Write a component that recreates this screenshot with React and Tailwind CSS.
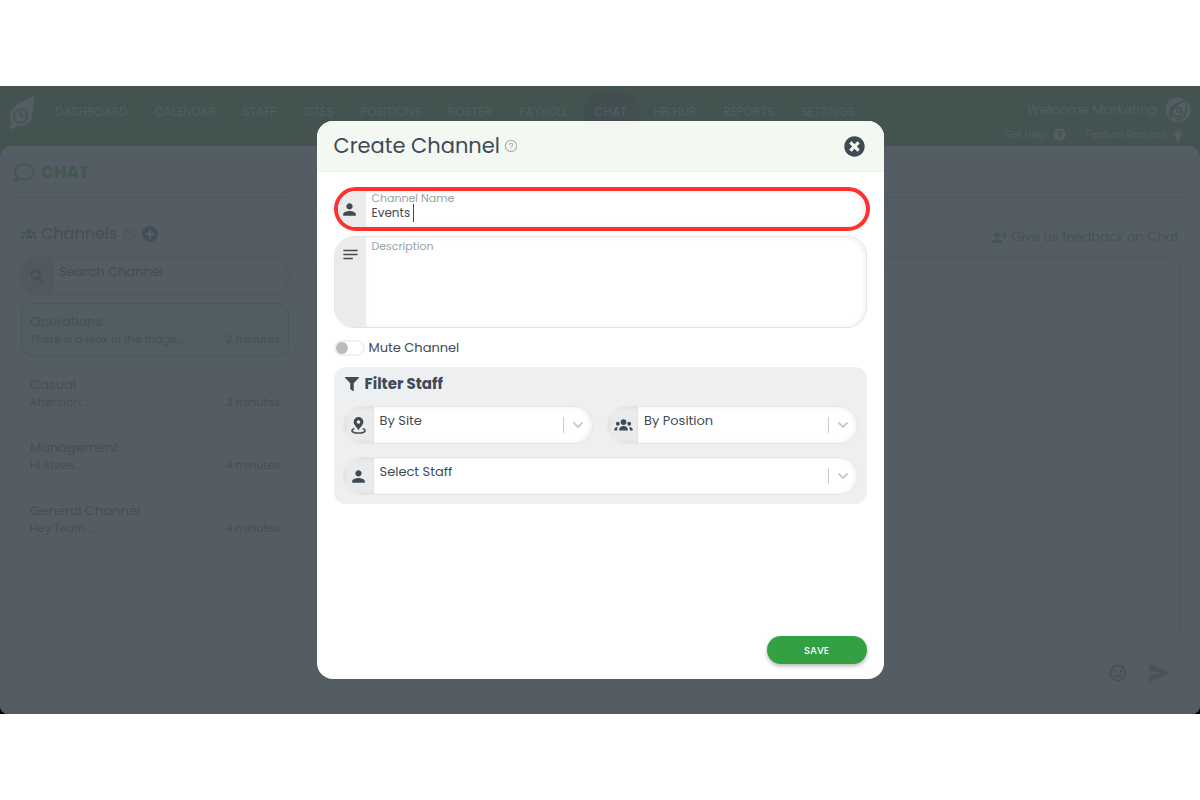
import { useState } from "react";
import {
    FaFilter,
    FaPlusCircle,
    FaQuestionCircle,
    FaRegComment,
    FaTimesCircle,
} from "react-icons/fa";
import {
    MdInsertEmoticon,
    MdNotes,
    MdPerson,
    MdRecordVoiceOver,
    MdSearch,
    MdSend,
} from "react-icons/md";
import { AiOutlineQuestionCircle } from "react-icons/ai";
import { ChevronDown } from "lucide-react";

const navItems = [
    "DASHBOARD",
    "CALENDAR",
    "STAFF",
    "SITES",
    "POSITIONS",
    "ROSTER",
    "PAYROLL",
    "CHAT",
    "HR HUB",
    "REPORTS",
    "SETTINGS",
];

const channels = [
    { name: "Operations", preview: "There is a leak in the fridge,...", time: "2 minutes" },
    { name: "Casual", preview: "Attention: ...", time: "3 minutes" },
    { name: "Management", preview: "Hi Steve...", time: "4 minutes" },
    { name: "General Channel", preview: "Hey Team. ...", time: "4 minutes" },
];

const LeafLogo = ({ className }) => (
    <svg viewBox="0 0 26 36" className={className} fill="none">
        <path
            d="M26 0C18 5 1 10 1 22c0 3 1 5 2 6l-3 5 4 3 3-4c8 1 14-2 16-8C25 16 25 8 26 0Z"
            fill="currentColor"
        />
        <circle
            cx="11.5"
            cy="21.5"
            r="7"
            stroke="#425350"
            strokeWidth="2"
            strokeDasharray="4.5 1"
        />
        <path d="M11.5 16v6h6" stroke="#425350" strokeWidth="1.5" />
    </svg>
);

const LeafAvatar = () => (
    <svg viewBox="0 0 26 26" className="size-[26px]" fill="none">
        <circle cx="13" cy="13" r="12.5" fill="#535d63" />
        <path d="M21 3C14 6 4 9 5 17c0 2 1 3 2 4" stroke="#425350" strokeWidth="2" />
        <path d="M21 3c1 7 1 13-2 16-2 3-5 4-9 4" stroke="#425350" strokeWidth="1.5" />
        <circle cx="12" cy="15" r="5" stroke="#425350" strokeWidth="2" />
        <path d="M12 11.5V15h4" stroke="#425350" strokeWidth="1.5" />
    </svg>
);

const BulbIcon = () => (
    <svg viewBox="0 0 14 14" className="size-[14px]" fill="none">
        <path
            d="M7 3a3.5 3.5 0 0 0-2 6.400V11h4V9.400A3.500 3.500 0 0 0 7 3ZM5.500 11h3v2.500h-3Z"
            fill="currentColor"
        />
        <path
            d="M7 0v1.500M2.300 2l1 1M11.700 2l-1 1M0 6.500h1.800M12.200 6.500H14"
            stroke="currentColor"
        />
    </svg>
);

const PeopleIcon = ({ className }) => (
    <svg viewBox="0 0 20 13" className={className} fill="currentColor">
        <circle cx="10" cy="3.2" r="3" />
        <circle cx="4" cy="5" r="2" />
        <circle cx="16" cy="5" r="2" />
        <path d="M5.500 12v-1.200C5.500 8.800 7.400 7.400 10 7.400s4.500 1.400 4.500 3.400V12Z" />
        <path d="M.3 12v-1c0-1.600 1.500-2.600 3.700-2.700-.5.800-.7 1.600-.7 2.500V12Z" />
        <path d="M19.700 12v-1c0-1.600-1.500-2.600-3.700-2.700.5.800.7 1.600.7 2.500V12Z" />
    </svg>
);

const PinIcon = ({ className }) => (
    <svg viewBox="0 0 16 18" className={className} fill="none">
        <path
            fillRule="evenodd"
            d="M8 0a5.200 5.200 0 0 0-5.200 5.200c0 3 3.200 5.300 5.200 8.800 2-3.500 5.200-5.800 5.200-8.800A5.200 5.200 0 0 0 8 0Zm0 3.400a1.900 1.900 0 1 1 0 3.800 1.900 1.900 0 0 1 0-3.800Z"
            fill="currentColor"
        />
        <path
            d="M3.500 12.200C2 12.700 1 13.400 1 14.200 1 15.800 4 17 8 17s7-1.200 7-2.800c0-.8-1-1.500-2.500-2"
            stroke="currentColor"
            strokeWidth="1.700"
        />
    </svg>
);

const SelectField = ({ id, label, icon }) => (
    <div className="flex h-[38px] min-w-0 flex-1 overflow-hidden rounded-full border border-[#e4e5e6] bg-white">
        <label
            htmlFor={id}
            aria-label={label}
            className="flex w-[30px] shrink-0 items-center justify-center bg-[#ebebeb] text-[#3f4b54] shadow-[inset_1px_0_4px_rgba(0,0,0,0.08)]"
        >
            {icon}
        </label>
        <div className="relative flex-1 rounded-r-full shadow-[inset_-2px_0_5px_rgba(0,0,0,0.06)]">
            <select
                id={id}
                className="h-full w-full appearance-none bg-transparent pb-2 pl-1.5 text-[13px] text-[#3f4b54] outline-none"
            >
                <option>{label}</option>
            </select>
            <span className="pointer-events-none absolute inset-y-0 right-1.5 flex items-center gap-1.5 text-[#cccccc]">
                <span className="h-4 w-px bg-[#cccccc]" />
                <ChevronDown className="size-4" strokeWidth={3} />
            </span>
        </div>
    </div>
);

const TopBar = () => (
    <header className="flex h-[60px] justify-between px-[9px] text-[#535d63]">
        <div className="flex items-start">
            <LeafLogo className="mt-[9px] h-[35px] w-[26px]" />
            <nav className="ml-2 flex gap-[3px] pt-1.5 text-[12px]">
                {navItems.map((item) => (
                    <a
                        key={item}
                        href="#"
                        className={
                            item === "CHAT"
                                ? "h-10 rounded-[20px] bg-[#414f50] px-3 leading-10"
                                : "h-10 px-3 leading-10"
                        }
                    >
                        {item}
                    </a>
                ))}
            </nav>
        </div>
        <div className="flex flex-col items-end pt-[11px]">
            <div className="flex items-center gap-2 text-[13px]">
                <span>Welcome Marketing</span>
                <LeafAvatar />
            </div>
            <div className="flex h-7 items-center gap-5 pr-1.5 text-[10px]">
                <a href="#" className="flex items-center gap-1.5">
                    Get Help <FaQuestionCircle className="size-[13px]" />
                </a>
                <a href="#" className="flex items-center gap-1">
                    Feature Request <BulbIcon />
                </a>
            </div>
        </div>
    </header>
);

const ChannelPanel = () => (
    <section className="w-[286px] shrink-0 rounded-xl bg-[#555d64] px-[9px] pt-[17px] shadow-[0_0_6px_#4f5b61]">
        <h2 className="flex h-6 items-center text-[16px] text-[#424e56]">
            <PeopleIcon className="mr-1 w-4" />
            Channels
            <AiOutlineQuestionCircle className="ml-1.5 size-[13px] text-[#4b5359]" />
            <button type="button" aria-label="Add channel" className="ml-1.5">
                <FaPlusCircle className="size-4" />
            </button>
        </h2>
        <div className="mt-[11px] flex h-[38px] overflow-hidden rounded-full border border-[#50595f] shadow-[0_0_4px_#4f585e]">
            <label
                htmlFor="search"
                aria-label="Search"
                className="flex w-[31px] items-center justify-center bg-[#51595f] text-[#424e56]"
            >
                <MdSearch className="size-[19px]" />
            </label>
            <input
                id="search"
                placeholder="Search Channel"
                className="min-w-0 flex-1 pb-2 pl-1.5 text-[13px] outline-none placeholder:text-[#424e56]"
            />
        </div>
        <ul className="mt-2 flex flex-col gap-[9px] text-[#444f58]">
            {channels.map((channel, idx) => (
                <li
                    key={channel.name}
                    className={
                        idx === 0
                            ? "flex h-[54px] flex-col justify-center rounded-xl border border-[#455a56] bg-[#525d62] px-2"
                            : "flex h-[54px] flex-col justify-center rounded-xl border border-[#525a60] px-2"
                    }
                >
                    <span className="text-[13px] leading-[18px]">{channel.name}</span>
                    <span className="flex justify-between text-[11px] leading-4">
                        <span>{channel.preview}</span>
                        <span>{channel.time}</span>
                    </span>
                </li>
            ))}
        </ul>
    </section>
);

const MessagePanel = () => (
    <section className="flex min-w-0 flex-1 flex-col rounded-xl bg-[#555d64] px-[9px] pt-5 shadow-[0_0_6px_#4f5b61]">
        <a
            href="#"
            className="flex h-6 items-center gap-1 self-end text-[13px] text-[#435453]"
        >
            <MdRecordVoiceOver className="size-4" />
            Give us feedback on Chat
        </a>
        <div className="mt-2 flex-1 rounded-xl border border-[#525a60] pt-3 shadow-[0_0_4px_#50595f]">
            <hr className="mx-3 border-[#4f5d60]" />
        </div>
        <div className="flex h-[58px] items-center gap-2 text-[#444f58]">
            <div className="flex h-10 flex-1 items-center justify-end rounded-full border border-[#525b61] pr-2.5">
                <MdInsertEmoticon className="size-5" />
            </div>
            <button type="button" aria-label="Send" className="pr-2 text-[#48535b]">
                <MdSend className="size-6" />
            </button>
        </div>
    </section>
);

const CreateChannelModal = () => {
    const [name, setName] = useState("Events");
    const [description, setDescription] = useState("");
    const [muted, setMuted] = useState(false);

    return (
        <div
            role="dialog"
            aria-label="Create Channel"
            className="flex h-[558px] w-[567px] flex-col overflow-hidden rounded-2xl bg-white text-[#3f4b54]"
        >
            <div className="flex h-[51px] items-center border-b border-[#eef2ed] bg-[#f3f8f3] pr-[19px] pl-[17px]">
                <h1 className="text-[21px]">Create Channel</h1>
                <AiOutlineQuestionCircle className="ml-1 size-3.5 text-[#a5adad]" />
                <button type="button" aria-label="Close" className="ml-auto">
                    <FaTimesCircle className="size-[21px]" />
                </button>
            </div>

            <form className="flex flex-1 flex-col px-[17px] pt-[15px] pb-[15px]">
                <div className="-mr-[3px] flex h-[44px] overflow-hidden rounded-full border-4 border-[#ff3030]">
                    <span className="flex w-7 shrink-0 items-center justify-center bg-[#ebebeb] pr-1">
                        <MdPerson className="size-[19px]" />
                    </span>
                    <div className="flex flex-1 flex-col rounded-r-full pl-1.5 shadow-[inset_-2px_0_5px_rgba(0,0,0,0.08)]">
                        <label
                            htmlFor="name"
                            className="text-[11px] leading-[14px] text-[#98a3a3]"
                        >
                            Channel Name
                        </label>
                        <div className="flex h-4 items-center gap-[3px]">
                            <input
                                id="name"
                                value={name}
                                onChange={(e) => setName(e.target.value)}
                                className="field-sizing-content text-[12px] leading-4 outline-none"
                            />
                            <span className="h-[18px] w-px bg-[#3f4b54]" />
                        </div>
                    </div>
                </div>

                <div className="mt-[5px] flex h-[92px] overflow-hidden rounded-[20px] border border-[#e4e4e4]">
                    <span className="flex w-[31px] shrink-0 justify-center bg-[#ebebeb] pt-2">
                        <MdNotes className="size-[19px]" />
                    </span>
                    <div className="flex flex-1 flex-col rounded-r-[20px] px-1.5 pt-px shadow-[inset_-1px_0_4px_rgba(0,0,0,0.08)]">
                        <label
                            htmlFor="description"
                            className="text-[11px] leading-4 text-[#98a3a3]"
                        >
                            Description
                        </label>
                        <textarea
                            id="description"
                            value={description}
                            onChange={(e) => setDescription(e.target.value)}
                            className="flex-1 resize-none text-[12px] outline-none"
                        />
                    </div>
                </div>

                <label className="mt-2.5 flex h-5 items-center gap-1 text-[13px]">
                    <input
                        type="checkbox"
                        checked={muted}
                        onChange={(e) => setMuted(e.target.checked)}
                        className="h-4 w-[31px] appearance-none rounded-full border-2 border-[#f0f0f0] bg-white before:block before:size-3 before:rounded-full before:bg-[#b9bcbc] checked:before:translate-x-4 checked:before:bg-[#32a043]"
                    />
                    Mute Channel
                </label>

                <fieldset className="mt-[9px] flex flex-col gap-[13px] rounded-xl bg-[#eeeff1] px-[9px] pt-2 pb-[9px]">
                    <h2 className="flex h-[18px] items-center gap-1.5 pl-0.5 text-[15px] font-bold">
                        <FaFilter className="size-3.5" />
                        Filter Staff
                    </h2>
                    <div className="flex gap-3.5">
                        <SelectField
                            id="site"
                            label="By Site"
                            icon={<PinIcon className="h-[17px] w-[15px]" />}
                        />
                        <SelectField
                            id="position"
                            label="By Position"
                            icon={<PeopleIcon className="w-[19px]" />}
                        />
                    </div>
                    <div className="flex">
                        <SelectField
                            id="staff"
                            label="Select Staff"
                            icon={<MdPerson className="size-[19px]" />}
                        />
                    </div>
                </fieldset>

                <button
                    type="button"
                    className="mt-auto h-7 w-[100px] self-end rounded-full bg-[#32a043] text-[10px] font-medium text-white shadow-[0_2px_4px_rgba(0,0,0,0.3)]"
                >
                    SAVE
                </button>
            </form>
        </div>
    );
};

export default function App() {
    return (
        <div className="flex min-h-screen items-center bg-white font-[Poppins,Inter,sans-serif]">
            <div className="relative w-full bg-black">
                <div className="flex h-[628px] flex-col overflow-hidden rounded-b-lg bg-[#425350]">
                    <TopBar />
                    <main className="flex flex-1 flex-col rounded-t-xl bg-[#555d64] px-3 pb-3">
                        <h1 className="flex h-[52px] items-center gap-1.5 border-b border-[#4d595e] pt-0.5 pl-0.5 text-[17px] font-bold text-[#405850]">
                            <FaRegComment className="size-[21px]" />
                            CHAT
                        </h1>
                        <div className="flex flex-1 gap-3 pt-[7px]">
                            <ChannelPanel />
                            <MessagePanel />
                        </div>
                    </main>
                </div>
                <div className="absolute inset-0 flex items-center justify-center">
                    <CreateChannelModal />
                </div>
            </div>
        </div>
    );
}
